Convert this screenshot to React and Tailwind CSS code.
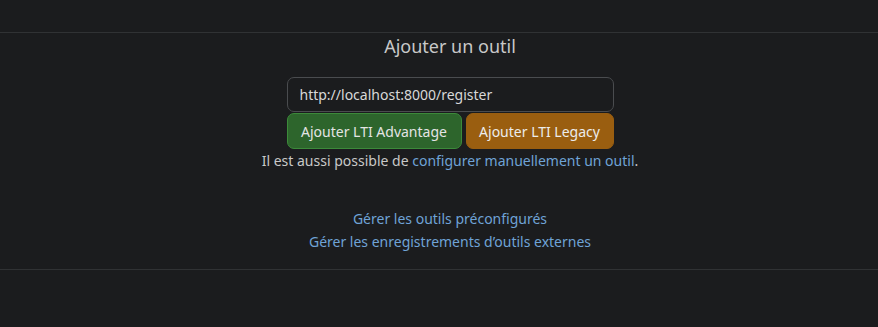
export default function App() {
  return (
    <div
      className="w-[878px] h-[327px] bg-[#1b1c1e] text-[#d0d0d0]"
      style={{ fontFamily: '"Noto Sans", "Open Sans", sans-serif' }}
    >
      <div className="h-[32px]" />
      <div className="border-t border-b border-[#303234] h-[238px] pl-[22px] flex flex-col items-center">
        <h2 className="mt-0 text-[18px] leading-[26px] text-[#c8c8c8]">Ajouter un outil</h2>
        <div className="mt-[18px] w-[327px]">
          <input
            defaultValue="http://localhost:8000/register"
            className="w-full h-[35px] px-[12px] bg-[#1b1c1e] border border-[#4a4c4f] rounded-[7px] text-[14px] text-[#d8d8d8] outline-none"
          />
          <div className="flex gap-[4px] mt-[1px]">
            <button className="w-[175px] h-[36px] rounded-[7px] bg-[#2d652c] border border-[#3c8a3a] text-[14px] text-[#e4e4e4]">
              Ajouter LTI Advantage
            </button>
            <button className="flex-1 h-[36px] rounded-[7px] bg-[#9a5e10] border border-[#9a5e10] text-[14px] text-[#ececec]">
              Ajouter LTI Legacy
            </button>
          </div>
        </div>
        <p className="mt-[1px] text-[14px] leading-[22px] text-[#c8c8c8]">
          Il est aussi possible de{' '}
          <a href="#" className="text-[#6fa3d6]">configurer manuellement un outil</a>.
        </p>
        <div className="mt-[35px] flex flex-col items-center text-[14px] leading-[23px] text-[#6fa3d6]">
          <a href="#">Gérer les outils préconfigurés</a>
          <a href="#">Gérer les enregistrements d’outils externes</a>
        </div>
      </div>
    </div>
  );
}
